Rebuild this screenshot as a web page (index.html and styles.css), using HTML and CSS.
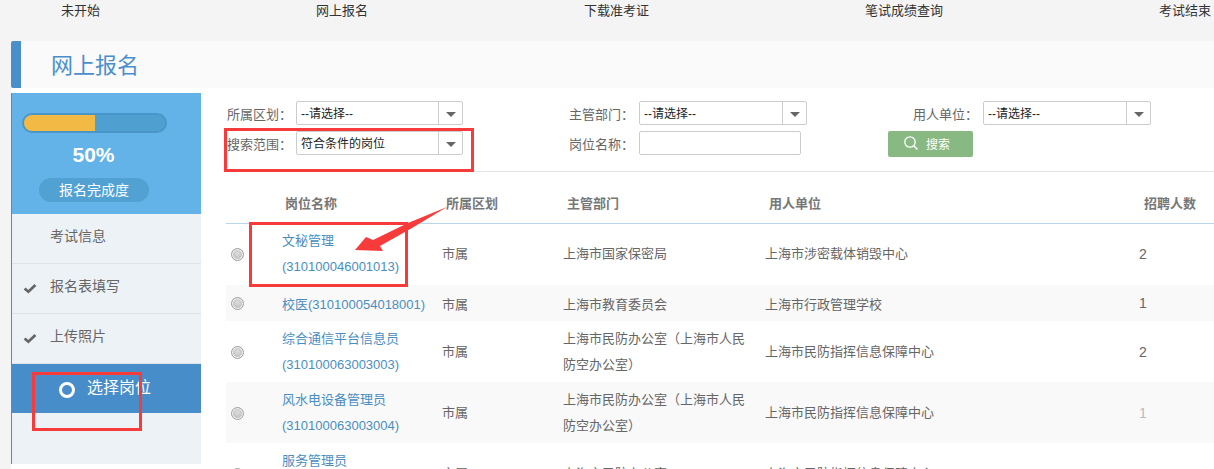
FILE: index.html
```html
<!DOCTYPE html>
<html lang="zh">
<head>
<meta charset="utf-8">
<title>网上报名</title>
<link rel="stylesheet" href="styles.css">
</head>
<body>
<div class="steps">
  <span class="s1">未开始</span><span class="s2">网上报名</span><span class="s3">下载准考证</span><span class="s4">笔试成绩查询</span><span class="s5">考试结束</span>
</div>
<div class="page">
  <header class="head"><h1>网上报名</h1></header>
  <div class="body">
    <aside class="side">
      <div class="prog">
        <div class="bar"><div class="fill"></div></div>
        <div class="pct">50%</div>
        <div class="pill">报名完成度</div>
      </div>
      <div class="item"><span>考试信息</span></div>
      <div class="item"><svg class="chk" viewBox="0 0 13 10"><path d="M1.5 5 L5 8 L11.5 1.8" fill="none" stroke="#666" stroke-width="2.6"/></svg><span>报名表填写</span></div>
      <div class="item"><svg class="chk" viewBox="0 0 13 10"><path d="M1.5 5 L5 8 L11.5 1.8" fill="none" stroke="#666" stroke-width="2.6"/></svg><span>上传照片</span></div>
      <div class="item cur"><i class="ring"></i><span>选择岗位</span></div>
    </aside>
    <main class="main">
      <div class="filters">
        <div class="f f1"><label>所属区划：</label><div class="sel"><span>--请选择--</span><b></b></div></div>
        <div class="f f2"><label>主管部门：</label><div class="sel"><span>--请选择--</span><b></b></div></div>
        <div class="f f3"><label>用人单位：</label><div class="sel"><span>--请选择--</span><b></b></div></div>
        <div class="f f1"><label>搜索范围：</label><div class="sel"><span>符合条件的岗位</span><b></b></div></div>
        <div class="f f2"><label>岗位名称：</label><div class="inp"></div></div>
        <div class="f f3b"><button class="btn"><svg viewBox="0 0 16 16" class="mag"><circle cx="7" cy="7" r="5.2" fill="none" stroke="#fff" stroke-width="1.3"/><path d="M10.8 10.8 L14.5 14.5" stroke="#fff" stroke-width="1.5"/></svg>搜索</button></div>
      </div>
      <table class="tbl">
        <colgroup><col class="c0"><col class="c1"><col class="c2"><col class="c3"><col class="c4"><col class="c5"></colgroup>
        <thead><tr><th></th><th class="pl">岗位名称</th><th class="pa">所属区划</th><th class="pa">主管部门</th><th class="pa">用人单位</th><th class="pa">招聘人数</th></tr></thead>
        <tbody>
          <tr class="h0"><td class="r"><i class="radio"></i></td><td><a>文秘管理<br>(310100046001013)</a></td><td>市属</td><td class="dept">上海市国家保密局</td><td>上海市涉密载体销毁中心</td><td class="n">2</td></tr>
          <tr class="odd h1"><td class="r"><i class="radio"></i></td><td><a>校医(310100054018001)</a></td><td>市属</td><td class="dept">上海市教育委员会</td><td>上海市行政管理学校</td><td class="n">1</td></tr>
          <tr class="h2"><td class="r"><i class="radio"></i></td><td><a>综合通信平台信息员<br>(310100063003003)</a></td><td>市属</td><td class="dept">上海市民防办公室（上海市人民防空办公室）</td><td>上海市民防指挥信息保障中心</td><td class="n">2</td></tr>
          <tr class="odd h2"><td class="r"><i class="radio"></i></td><td><a>风水电设备管理员<br>(310100063003004)</a></td><td>市属</td><td class="dept">上海市民防办公室（上海市人民防空办公室）</td><td>上海市民防指挥信息保障中心</td><td class="n faded">1</td></tr>
          <tr class="h2"><td class="r"><i class="radio"></i></td><td><a>服务管理员<br>(310100063003005)</a></td><td>市属</td><td class="dept">上海市民防办公室</td><td>上海市民防指挥信息保障中心</td><td class="n">1</td></tr>
        </tbody>
      </table>
    </main>
  </div>
</div>
<div class="mark m1"></div>
<div class="mark m2"></div>
<div class="mark m3"></div>
<svg class="arrow" viewBox="350 205 100 50"><path d="M447 207 L408 223 L373 240 L366 237 L355 250 L383 251 L380 246 L412 228 Z" fill="#f73b3b"/></svg>
</body>
</html>
```
FILE: styles.css
```css
* { box-sizing: border-box; }
html, body { margin: 0; height: 100%; overflow: hidden; }
body { background: #f4f4f4; font-family: "Liberation Sans", "Noto Sans CJK SC", sans-serif; font-size: 13px; color: #666; position: relative; }
.steps { height: 41px; position: relative; color: #333; font-size: 13px; line-height: 22px; }
.steps span { position: absolute; top: 0; white-space: nowrap; }
.s1 { left: 61px; } .s2 { left: 316px; } .s3 { left: 584px; } .s4 { left: 865px; } .s5 { left: 1159px; }
.page { margin-left: 11px; }
.head { height: 47px; background: #fafafa; border-left: 10px solid #4a8ecb; border-radius: 2px 0 0 2px; }
.head h1 { margin: 0; padding: 1px 0 0 30px; font-size: 22px; font-weight: 400; line-height: 47px; color: #4a8ecb; }
.body { background: #fff; padding-top: 5px; display: flex; align-items: flex-start; height: 381px; }
.side { width: 190px; height: 371px; background: #edf2f7; border-left: 1px solid #4a8ecb; flex: none; }
.prog { height: 121px; background: #63b3e8; padding-top: 20px; }
.bar { width: 145px; height: 20px; margin-left: 10px; background: #4f9fd1; border-radius: 10px; border: 2px solid #4b96c8; overflow: hidden; }
.fill { width: 50%; height: 100%; background: #f2b944; }
.pct { margin-top: 10px; width: 163px; text-align: center; color: #fff; font-weight: 700; font-size: 21px; line-height: 24px; }
.pill { margin: 11px 0 0 27px; width: 110px; height: 24px; background: #51a1d3; border-radius: 12px; color: #fff; text-align: center; font-size: 14px; line-height: 24px; }
.item { height: 50px; border-bottom: 1px solid #dde3e9; display: flex; align-items: center; padding: 0 0 7px 38px; font-size: 14px; color: #666; position: relative; }
.chk { position: absolute; left: 11px; top: 19px; width: 14px; height: 11px; }
.cur { background: #478dc9; color: #fff; font-size: 16px; padding: 0 0 6px 75px; border-bottom: 0; height: 49px; }
.ring { position: absolute; left: 47px; top: 18px; width: 16px; height: 16px; border: 3px solid #fff; border-radius: 50%; }
.main { flex: 1; padding: 0 0 0 25px; min-width: 0; }
.filters { position: relative; height: 79px; border-bottom: 1px solid #e4e4e4; }
.f { position: absolute; display: flex; align-items: center; height: 24px; }
.f label { width: 70px; font-size: 13px; color: #666; white-space: nowrap; }
.f:nth-child(1), .f:nth-child(2), .f:nth-child(3) { top: 8px; }
.f:nth-child(4), .f:nth-child(5), .f:nth-child(6) { top: 38px; }
.f1 { left: 1px; }
.f2 { left: 343px; }
.f3 { left: 687px; }
.f3b { left: 662px; }
.f1 label { width: 69px; }
.sel { width: 168px; height: 24px; border: 1px solid #ccc; border-radius: 2px; background: #fff; display: flex; color: #222; font-size: 12px; line-height: 24px; padding-left: 4px; }
.f1 .sel { width: 167px; }
.sel span { flex: 1; }
.sel b { width: 24px; border-left: 1px solid #ccc; position: relative; }
.sel b::after { content: ""; position: absolute; left: 7px; top: 10px; border: 5px solid transparent; border-top: 5px solid #666; border-bottom: 0; }
.inp { width: 162px; height: 24px; border: 1px solid #ccc; border-radius: 2px; background: #fff; }
.btn { width: 85px; height: 26px; border: 0; border-radius: 2px; background: #88b982; color: #fff; font: 12px "Liberation Sans", "Noto Sans CJK SC", sans-serif; display: flex; align-items: center; padding: 0 0 2px 15px; margin-top: 2px; }
.mag { width: 16px; height: 16px; margin-right: 7px; }
.tbl { width: 988px; border-collapse: collapse; table-layout: fixed; }
.c0 { width: 56px; } .c1 { width: 160px; } .c2 { width: 121px; } .c3 { width: 202px; } .c4 { width: 376px; } .c5 { width: 73px; }
th { height: 51px; font-size: 13px; text-align: left; color: #777; font-weight: 700; border-bottom: 1px solid #b8d6ec; padding: 10px 0 0 3px; }
th.pa { padding-left: 4px; }
th:last-child { padding-left: 3px; }
td { padding: 0; font-size: 13px; color: #666; }
.h0 { height: 62px; }
.h1 { height: 36px; }
.h2 { height: 61px; }
.h0 td, .h2 td { line-height: 26px; }
.odd { background: #f9f9f9; }
td a { color: #4a8ebf; }
.dept { padding-right: 16px; }
.r { padding-left: 5px; }
.radio { display: block; width: 13px; height: 13px; margin-top: 1px; border-radius: 50%; border: 1px solid #a3a3a3; box-shadow: inset 0 0 0 1px #f4f4f4; background: radial-gradient(circle at 50% 40%, #dedede, #b0b0b0); }
.n { text-indent: -2px; font-size: 14px; }
.faded { color: #bbb; }
.mark { position: absolute; border: 3px solid #f73b3b; }
.m1 { left: 224px; top: 128px; width: 250px; height: 44px; }
.m2 { left: 249px; top: 222px; width: 159px; height: 65px; }
.m3 { left: 32px; top: 372px; width: 110px; height: 59px; }
.arrow { position: absolute; left: 350px; top: 205px; width: 100px; height: 50px; }
```
